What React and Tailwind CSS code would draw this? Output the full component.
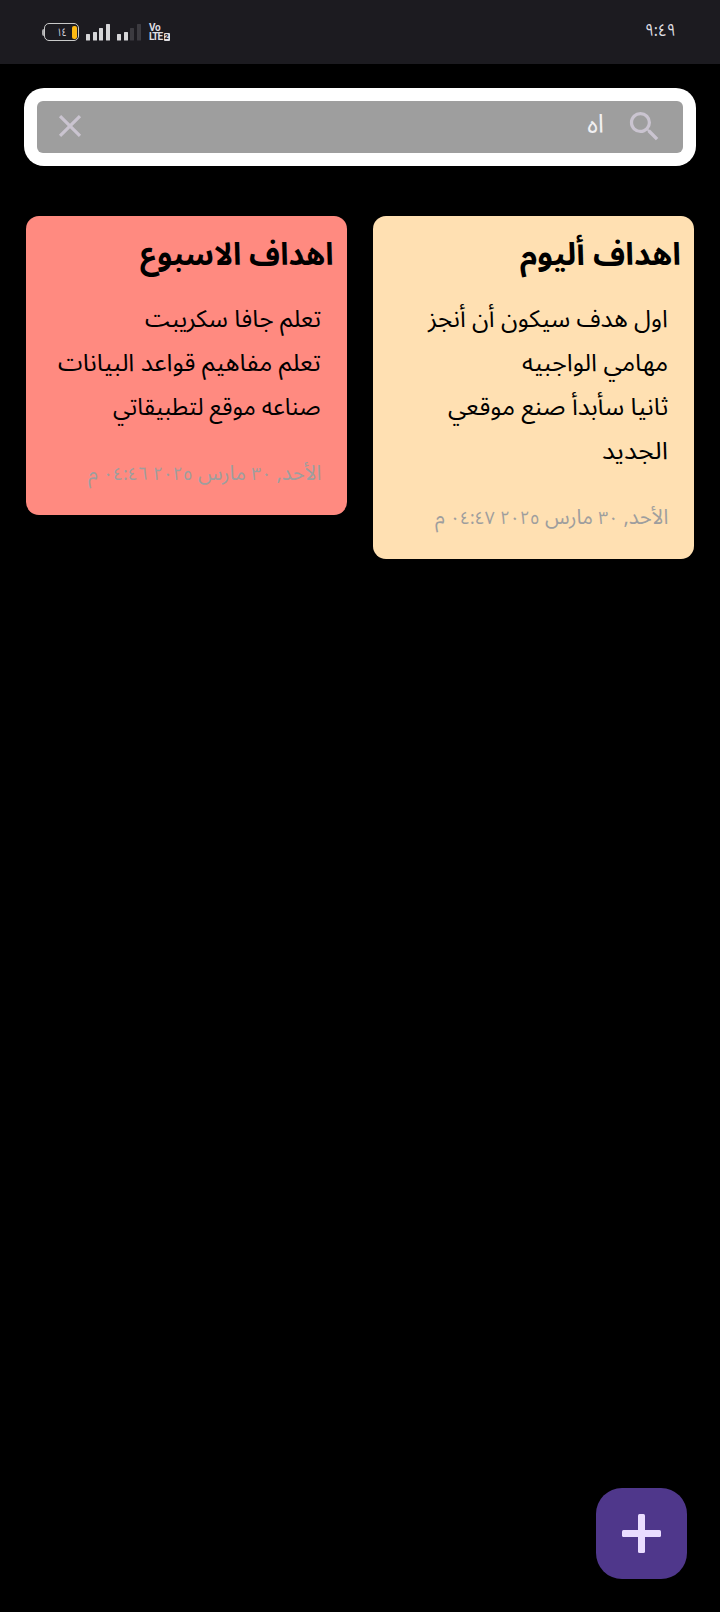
import { useLayoutEffect, useRef, useState } from "react";

const notes = [
  {
    title: "اهداف أليوم",
    titleWidth: 161,
    tone: "bg-[#ffe0b2] h-[343px]",
    lines: [
      ["اول هدف سيكون أن أنجز", 240],
      ["مهامي الواجبيه", 146],
      ["ثانيا سأبدأ صنع موقعي", 220],
      ["الجديد", 66],
    ],
    time: "٠٤:٤٧",
  },
  {
    title: "اهداف الاسبوع",
    titleWidth: 194,
    tone: "bg-[#ff8a80] h-[299px]",
    lines: [
      ["تعلم جافا سكريبت", 176],
      ["تعلم مفاهيم قواعد البيانات", 263],
      ["صناعه موقع لتطبيقاتي", 208],
    ],
    time: "٠٤:٤٦",
  },
];

function FitText({ width, children }) {
  const ref = useRef(null);
  const [scale, setScale] = useState(1);
  useLayoutEffect(() => {
    setScale(width / ref.current.offsetWidth);
  }, [width]);
  return (
    <span
      ref={ref}
      className="inline-block origin-right whitespace-nowrap"
      style={{ transform: `scaleX(${scale})` }}
    >
      {children}
    </span>
  );
}

function Digits({ children }) {
  return <span className="text-[18px] tracking-[-2.2px]">{children}</span>;
}

function StatusBar() {
  return (
    <header dir="ltr" className="flex h-16 items-center justify-between bg-[#1c1b20] pr-[44px] pl-[42px] text-[#dedde0]">
      <div className="flex items-center">
        <div className="h-[7px] w-[2px] rounded-l-sm bg-[#a9a9ab]" />
        <div className="flex h-[18px] w-[35px] items-center justify-end gap-[5px] rounded-[5px] border-[1.5px] border-[#c9cac9] pr-px">
          <span className="text-[11px] leading-none"><FitText width={10}>١٤</FitText></span>
          <span className="h-[13px] w-[5px] rounded-[2px] bg-[#fdb913]" />
        </div>
        <svg className="ml-[7px] h-[18px] w-[56px]" viewBox="0 0 56 18" fill="#d6d6d8">
          <rect x="0" y="11" width="4" height="6.5" rx=".5" />
          <rect x="7" y="9" width="4" height="8.5" rx=".5" />
          <rect x="13" y="5" width="4" height="12.5" rx=".5" />
          <rect x="20" y="1" width="4" height="16.5" rx=".5" />
          <rect x="31" y="11" width="4" height="6.5" rx=".5" />
          <rect x="38" y="9" width="4" height="8.5" rx=".5" />
          <g fill="#3c3b40">
            <rect x="44" y="5" width="4" height="12.5" rx=".5" />
            <rect x="51" y="1" width="4" height="16.5" rx=".5" />
          </g>
        </svg>
        <div className="ml-[7px] flex flex-col gap-px font-[Roboto] text-[10px] leading-[8px] font-bold tracking-[-0.2px]">
          <span>Vo</span>
          <span className="flex items-center tracking-[-1px]">
            LTE
            <b className="ml-[1.5px] flex h-[8px] w-[6px] items-center justify-center rounded-[1px] bg-[#dedde0] text-[7px] tracking-normal text-[#1c1b20]">2</b>
          </span>
        </div>
      </div>
      <time className="mb-[2px] text-[17px] leading-none"><FitText width={31}>٩:٤٩</FitText></time>
    </header>
  );
}

export default function App() {
  return (
    <div dir="rtl" className="flex h-[1612px] w-[720px] flex-col bg-black font-['Noto_Sans_Arabic','Noto_Sans','DejaVu_Sans',sans-serif]">
      <StatusBar />
      <div className="mx-6 mt-6 h-[78px] rounded-[20px] bg-white p-[13px]">
        <div className="flex h-[52px] items-center rounded-[6px] bg-[#9e9e9e] pr-[19px] pl-[14px]">
          <svg className="mb-[2px] size-[39px]" viewBox="0 0 24 24" fill="#cac4d0">
            <path d="M15.5 14h-.79l-.28-.27A6.471 6.471 0 0 0 16 9.5 6.5 6.5 0 1 0 9.5 16c1.61 0 3.09-.59 4.23-1.57l.27.28v.79l5 4.99L20.49 19l-4.99-5zm-6 0C7.01 14 5 11.99 5 9.5S7.01 5 9.5 5 14 7.01 14 9.5 11.99 14 9.5 14z" />
          </svg>
          <span className="mr-[21px] mb-[4px] flex-1 text-[26px] leading-none text-[#f1f0f2]">
            <FitText width={17}>اه</FitText>
          </span>
          <svg className="mb-[2px] size-[38px]" viewBox="0 0 24 24" fill="#cac4d0">
            <path d="M19 6.41 17.59 5 12 10.59 6.41 5 5 6.41 10.59 12 5 17.59 6.41 19 12 13.41 17.59 19 19 17.59 13.41 12z" />
          </svg>
        </div>
      </div>
      <main className="mx-[26px] mt-[50px] grid grid-cols-2 items-start gap-[26px]">
        {notes.map((note) => (
          <article key={note.title} className={`rounded-[13px] pt-[13px] ${note.tone}`}>
            <h2 className="h-[52px] pr-[13px] text-[31px] leading-[52px] font-bold text-black">
              <FitText width={note.titleWidth}>{note.title}</FitText>
            </h2>
            <div className="mt-[17px] pr-[26px] text-[24px] leading-[44px] text-black">
              {note.lines.map(([text, width]) => (
                <p key={text} className="h-[44px]"><FitText width={width}>{text}</FitText></p>
              ))}
            </div>
            <p className="mt-[23px] h-[40px] pr-[26px] text-[21px] leading-[40px] text-[#9e9e9e]">
              <FitText width={233}>
                الأحد, <Digits>٣٠</Digits> مارس <Digits>٢٠٢٥</Digits> <Digits>{note.time}</Digits> م
              </FitText>
            </p>
          </article>
        ))}
      </main>
      <button dir="ltr" aria-label="إضافة" className="mt-auto mr-[33px] mb-[33px] flex size-[91px] items-center justify-center rounded-[26px] bg-[#4f378b]">
        <svg className="size-[39px]" viewBox="0 0 39 39" fill="#eaddff">
          <rect x="16" y="0" width="7" height="39" rx="1.5" />
          <rect x="0" y="16" width="39" height="7" rx="1.5" />
        </svg>
      </button>
    </div>
  );
}
